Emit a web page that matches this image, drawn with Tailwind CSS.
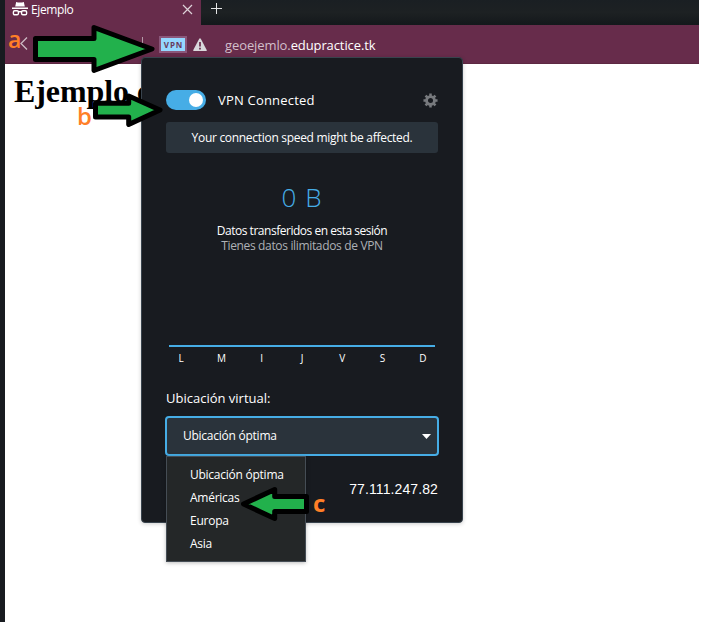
<!DOCTYPE html>
<html lang="es">
<head>
<meta charset="utf-8">
<title>Ejemplo</title>
<script src="https://cdn.jsdelivr.net/npm/@tailwindcss/browser@4"></script>
</head>
<body class="relative h-[628px] w-[701px] overflow-hidden bg-white font-['Open_Sans','Noto_Sans',sans-serif] text-white">
<div class="flex h-[622px] w-[699px]">
  <div class="w-[5px] shrink-0 bg-[#181b20]"></div>
  <div class="flex grow flex-col">
    <header class="flex h-[25px] bg-linear-to-b from-[#1a1f23] via-[#1d2123] to-[#14181b]">
      <div class="flex w-[196px] items-start bg-[#672c4b] pl-[7px]">
        <svg class="mt-[2px] h-[14px] w-[16px] shrink-0" viewBox="0 0 16 14" fill="#fff"><path d="M4.2 0 L6 .4 H10 L11.8 0 L12.8 4.6 H3.2Z M0 5.4 H16 V7 H0Z"/><g fill="none" stroke="#fff" stroke-width="1.4"><rect x="1.4" y="8.8" width="5" height="4" rx="1.3"/><rect x="9.6" y="8.8" width="5" height="4" rx="1.3"/><path d="M6 9.7 H10"/></g></svg>
        <span class="mt-[1px] ml-[3px] w-[151px] whitespace-nowrap text-[12px] leading-[18px] tracking-[-0.4px]">Ejemplo</span>
        <svg class="mt-[4px] h-[11px] w-[11px] shrink-0" viewBox="0 0 11 11" stroke="#ddd2d8" stroke-width="1.2"><path d="M1 1 L10 10 M10 1 L1 10"/></svg>
      </div>
      <svg class="mt-[3px] ml-[10px] h-[11px] w-[11px]" viewBox="0 0 11 11" stroke="#e4e5e6" stroke-width="1"><path d="M0 5.5 H11 M5.5 0 V11"/></svg>
    </header>
    <nav class="flex h-[39px] items-start border-b border-[#5d2842] bg-[#672c4b]">
      <svg class="mt-[12px] ml-[15px] h-[13px] w-[8px]" viewBox="0 0 8 13" fill="none" stroke="#ccbac4" stroke-width="1.3"><path d="M7 .5 L1 6.5 L7 12.5"/></svg>
      <div class="mt-[12px] ml-[114px] h-[14px] w-px bg-[#b49aa8]"></div>
      <div class="mt-[11px] ml-[16px] flex h-[17px] w-[28px] items-center justify-center border-2 border-[#8a577a] bg-[#94d8ff] pl-px text-[8px] leading-none font-bold tracking-[0.9px] text-[#683b5b]">VPN</div>
      <svg class="mt-[13px] ml-[6px] h-[14px] w-[14px]" viewBox="0 0 14 14"><path d="M6.2 .8 Q7 -.3 7.8 .8 L13.7 12 Q14 13 13 13 H1 Q0 13 .3 12Z" fill="#d9d8dc"/><path d="M7 4 V8.5 M7 9.8 V11.5" stroke="#672c4b" stroke-width="1.7"/></svg>
      <div class="mt-[11px] ml-[18px] whitespace-nowrap text-[13px] leading-[18px] tracking-[-0.1px] text-[#d1bfca]">geoejemlo.<span class="text-white">edupractice.tk</span></div>
    </nav>
    <main class="grow bg-white pt-[9px] pl-[9px] text-black"><h1 class="whitespace-nowrap font-['Liberation_Serif',serif] text-[32px] leading-[36px] font-bold tracking-[-0.1px]">Ejemplo de</h1></main>
  </div>
</div>

<section class="absolute top-[57px] left-[141px] flex h-[466px] w-[322px] flex-col rounded-[4px] border border-[#38434d] bg-[#181b20] px-[24px] shadow-[0_1px_4px_#0003]">
  <div class="mt-[32px] flex h-[20px] items-center">
    <div class="flex h-[20px] w-[40px] items-center justify-end rounded-full bg-[#46ade6] pr-[3px]"><div class="h-[14px] w-[14px] rounded-full bg-white"></div></div>
    <span class="mt-[2px] ml-[12px] whitespace-nowrap text-[13px] tracking-[0.2px]">VPN Connected</span>
    <svg class="ml-auto h-[15px] w-[15px]" viewBox="0 0 16 16"><circle cx="8" cy="8" r="4.2" fill="none" stroke="#777a7e" stroke-width="3"/><path d="M8 .5 V3.5 M8 12.5 V15.5 M.5 8 H3.5 M12.5 8 H15.5 M2.7 2.7 L4.8 4.8 M11.2 11.2 L13.3 13.3 M13.3 2.7 L11.2 4.8 M4.8 11.2 L2.7 13.3" stroke="#777a7e" stroke-width="2.7"/></svg>
  </div>
  <div class="mt-[12px] flex h-[31px] items-center justify-center rounded-[3px] bg-[#2a333b] whitespace-nowrap text-[12px] tracking-[-0.3px]">Your connection speed might be affected.</div>
  <div class="mt-[26px] text-center font-['Open_Sans'] text-[26px] leading-[36px] font-light tracking-[1px] text-[#46ade6]">0 B</div>
  <div class="mt-[8px] text-center whitespace-nowrap text-[12px] leading-[15px] tracking-[-0.48px]">Datos transferidos en esta sesión</div>
  <div class="text-center whitespace-nowrap text-[12px] leading-[15px] tracking-[-0.34px] text-[#aeb1b6]">Tienes datos ilimitados de VPN</div>
  <div class="mt-[92px] mr-[3px] ml-[3px] h-[2px] shrink-0 bg-[#46ade6]"></div>
  <div class="mt-[4px] ml-[-5px] grid w-[282px] grid-cols-7 text-center text-[10px] leading-[14px]"><span>L</span><span>M</span><span>I</span><span>J</span><span>V</span><span>S</span><span>D</span></div>
  <div class="mt-[24px] whitespace-nowrap text-[13px] leading-[18px] tracking-[0px]">Ubicación virtual:</div>
  <div class="mt-[9px] -ml-px flex h-[40px] w-[274px] shrink-0 items-center rounded-[4px] border-2 border-[#46ade6] bg-[#2a333b] pr-[6px] pl-[16px] text-[12px] tracking-[-0.25px] whitespace-nowrap">Ubicación óptima<svg class="ml-auto h-[5px] w-[9px]" viewBox="0 0 9 5" fill="#fff"><path d="M0 0 H9 L4.5 5Z"/></svg></div>
  <div class="mt-[23px] text-right font-['Liberation_Sans',sans-serif] text-[14px] leading-[20px] tracking-[0.1px]">77.111.247.82</div>
</section>

<ul class="absolute top-[456px] left-[166px] h-[106px] w-[140px] border border-[#454d55] bg-[#242728] pt-[6px] pl-[23px] whitespace-nowrap text-[12px] leading-[23px] tracking-[-0.25px] shadow-[0_1px_4px_#0004]">
  <li>Ubicación óptima</li><li>Américas</li><li>Europa</li><li>Asia</li>
</ul>

<svg class="absolute inset-0 h-[628px] w-[701px]" viewBox="0 0 701 628" fill="#22b14c" stroke="#000" stroke-width="5" stroke-linejoin="round">
  <path d="M35.5 38.5 H94 V27.5 L152 49 L94 70.5 V59.5 H35.5Z"/>
  <path d="M95.5 103.3 H128.7 V96 L160 110 L128.7 124.5 V117 H95.5Z"/>
  <path d="M306.5 496.5 H274.7 V489.5 L243.5 504 L274.7 518.5 V511.5 H306.5Z"/>
</svg>
<span class="absolute top-[27px] left-[8px] text-[23px] leading-[24px] font-semibold text-[#ff7f27]">a</span>
<span class="absolute top-[104px] left-[77px] text-[24px] leading-[24px] font-semibold text-[#ff7f27]">b</span>
<span class="absolute top-[491px] left-[313px] text-[24px] leading-[24px] font-bold text-[#ff7f27]">c</span>
</body>
</html>
